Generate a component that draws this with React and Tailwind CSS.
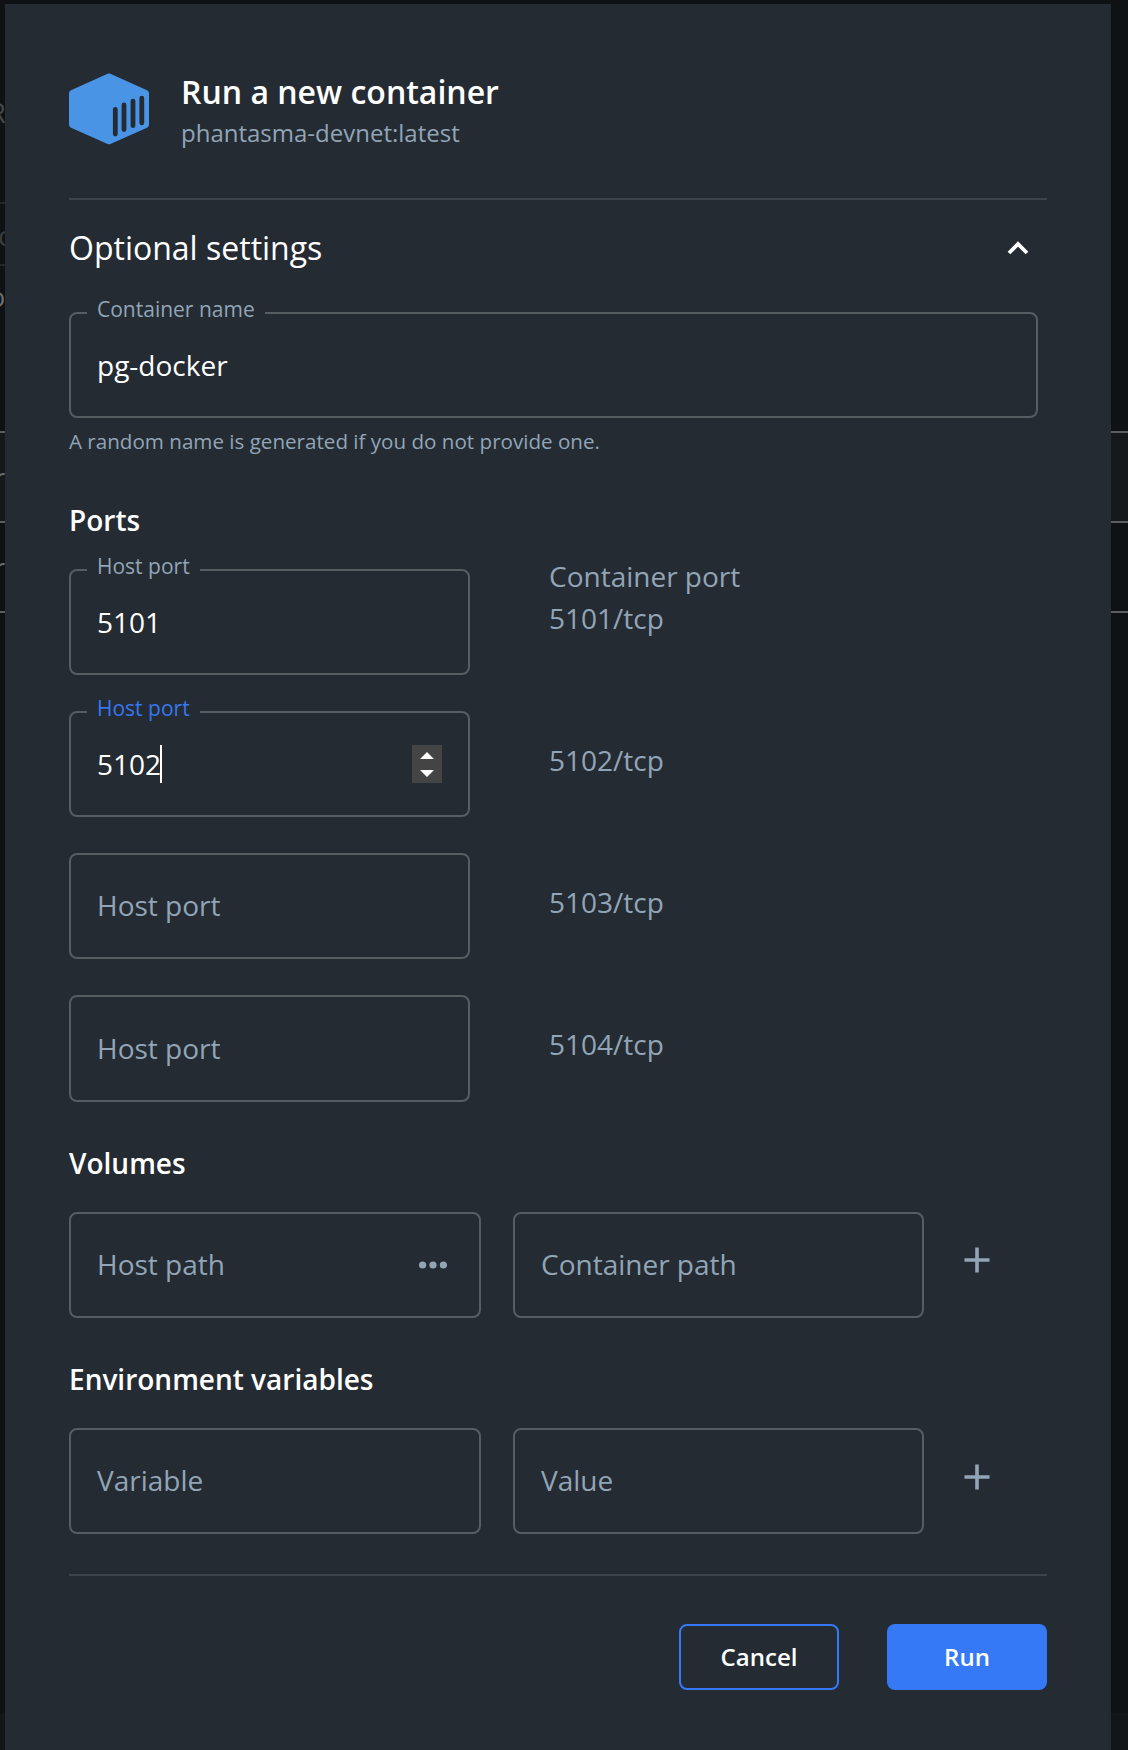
import React from "react";

function Field({ className = "h-[106px]", label, value, floating, active, children }) {
  return (
    <div className={`relative flex items-center rounded-lg border-2 border-[#575d61] px-[26px] ${className}`}>
      {floating && (
        <span
          className={`absolute -top-[19px] left-[16px] bg-[#242b32] pr-[10px] pl-[10px] text-[21px] leading-[28px] whitespace-nowrap ${active ? "text-[#3678ee]" : "text-[#92a5b7]"}`}
        >
          {label}
        </span>
      )}
      <span className={`text-[28px] leading-[38px] whitespace-nowrap ${value ? "text-white" : "-mt-[2px] text-[#92a5b7]"}`}>
        {value || label}
      </span>
      {children}
    </div>
  );
}

function Plus({ className = "" }) {
  return (
    <svg className={className} width="26" height="26" viewBox="0 0 26 26" stroke="#92a5b7" strokeWidth="3.6">
      <path d="M13 0.5V25.5M0.5 13H25.5" />
    </svg>
  );
}

function Logo() {
  return (
    <svg className="mt-[5px]" width="80" height="72" viewBox="0 0 80 72">
      <path
        d="M38.6 0.8Q40 0 41.4 0.8L78 17.3Q80 18.3 80 20.3V51.7Q80 53.7 78 54.7L41.4 71Q40 71.6 38.6 71L2 54.7Q0 53.7 0 51.7V20.3Q0 18.3 2 17.3Z"
        fill="#4a94e6"
      />
      <path d="M46.3 36.5V61M55 32V56.5M64 28.2V52.7M72.8 25.2V49.9" stroke="#242b32" strokeWidth="4.8" strokeLinecap="round" />
    </svg>
  );
}

function PortRow({ port, children }) {
  return (
    <div className="flex h-[142px] items-start">
      {children}
      <div className="ml-[79px] pt-[30px] text-[28px] leading-[38px] text-[#92a5b7]">{port}/tcp</div>
    </div>
  );
}

function Backdrop({ className, left }) {
  const line = "h-[2px] shrink-0 bg-[#5b5d5e]";
  const text = "absolute text-[27px] leading-[30px]";
  return (
    <div className={`relative flex h-full shrink-0 flex-col overflow-hidden bg-[#0e1214] ${className}`}>
      <div className="h-[431px] shrink-0" />
      <div className={line} />
      <div className="h-[88px] shrink-0 bg-[#16191b]" />
      <div className={line} />
      <div className="h-[88px] shrink-0" />
      <div className={line} />
      <div className="h-[1100px] shrink-0" />
      <div className="flex-1 bg-[#121618]" />
      {left && (
        <>
          <div className="absolute top-[202px] h-[2px] w-full bg-[#24282b]" />
          <div className="absolute top-[264px] h-[2px] w-full bg-[#24282b]" />
          <span className={`${text} top-[98px] -left-[11px] text-[#44484b]`}>R</span>
          <span className={`${text} top-[221px] -left-[2px] text-[#3a3d3f]`}>c</span>
          <span className={`${text} top-[282px] -left-[11px] text-[#6c6e6f]`}>o</span>
          <span className={`${text} top-[463px] -left-[6px] text-[#6c6e6f]`}>r</span>
          <span className={`${text} top-[553px] -left-[6px] text-[#6c6e6f]`}>r</span>
        </>
      )}
    </div>
  );
}

export default function App() {
  return (
    <div className="flex h-[1750px] w-[1128px] overflow-hidden bg-[#0e1214] font-['Open_Sans','Noto_Sans',sans-serif]">
      <Backdrop className="w-[5px]" left />
      <main className="mt-[4px] w-[1106px] shrink-0 bg-[#242b32] pr-[64px] pl-[64px]">
        <header className="flex h-[196px] items-start border-b-2 border-[#3d454b] pt-[64px]">
          <Logo />
          <div className="ml-[32px] pt-[2px]">
            <h1 className="text-[32px] leading-[44px] font-semibold text-white">Run a new container</h1>
            <p className="mt-[2px] text-[24px] leading-[34px] text-[#92a5b7]">phantasma-devnet:latest</p>
          </div>
        </header>

        <div className="flex h-[112px] items-start justify-between pt-[26px] pr-[18px]">
          <h2 className="text-[32px] leading-[44px] text-white">Optional settings</h2>
          <svg className="mt-[15px]" width="22" height="14" viewBox="0 0 22 14" fill="none" stroke="#fff" strokeWidth="3.8">
            <path d="M2 12L11 3L20 12" />
          </svg>
        </div>
        <Field className="h-[106px] w-[969px]" label="Container name" value="pg-docker" floating />
        <p className="mt-[9px] text-[20.6px] leading-[28px] text-[#92a5b7]">
          A random name is generated if you do not provide one.
        </p>

        <h3 className="mt-[46px] text-[28px] leading-[38px] font-semibold text-white">Ports</h3>
        <div className="mt-[30px]">
          <div className="flex h-[142px] items-start">
            <Field className="h-[106px] w-[401px]" label="Host port" value="5101" floating />
            <div className="-mt-[14px] ml-[79px] text-[28px] leading-[42px] text-[#92a5b7]">
              <div>Container port</div>
              <div>5101/tcp</div>
            </div>
          </div>
          <PortRow port="5102">
            <Field className="h-[106px] w-[401px]" label="Host port" value="5102" floating active>
              <span className="-ml-[1px] h-[38px] w-[2px] bg-white" />
              <span className="ml-auto flex h-[38px] w-[30px] items-center justify-center bg-[#444444]">
                <svg width="14" height="26" viewBox="0 0 14 26" fill="#fff">
                  <path d="M0 8L7 1L14 8ZM0 19H14L7 26Z" />
                </svg>
              </span>
            </Field>
          </PortRow>
          <PortRow port="5103">
            <Field className="h-[106px] w-[401px]" label="Host port" />
          </PortRow>
          <PortRow port="5104">
            <Field className="h-[107px] w-[401px]" label="Host port" />
          </PortRow>
        </div>

        <h3 className="mt-[7px] text-[28px] leading-[38px] font-semibold text-white">Volumes</h3>
        <div className="mt-[30px] flex items-start">
          <Field className="h-[106px] w-[412px]" label="Host path">
            <svg className="mr-[6px] ml-auto" width="28" height="8" viewBox="0 0 28 8" fill="#92a5b7">
              <circle cx="3.6" cy="4" r="3.6" />
              <circle cx="14" cy="4" r="3.6" />
              <circle cx="24.4" cy="4" r="3.6" />
            </svg>
          </Field>
          <Field className="ml-[32px] h-[106px] w-[411px]" label="Container path" />
          <Plus className="mt-[35px] ml-[40px]" />
        </div>

        <h3 className="mt-[42px] text-[28px] leading-[38px] font-semibold text-white">Environment variables</h3>
        <div className="mt-[30px] flex items-start">
          <Field className="h-[106px] w-[412px]" label="Variable" />
          <Field className="ml-[32px] h-[106px] w-[411px]" label="Value" />
          <Plus className="mt-[36px] ml-[40px]" />
        </div>

        <footer className="mt-[40px] flex justify-end gap-12 border-t-2 border-[#3d454b] pt-[48px]">
          <button className="h-[66px] w-[160px] rounded-lg border-2 border-[#3579f6] text-[24px] font-semibold text-white">Cancel</button>
          <button className="h-[66px] w-[160px] rounded-lg bg-[#3579f6] text-[24px] font-semibold text-white">Run</button>
        </footer>
      </main>
      <Backdrop className="w-[17px]" />
    </div>
  );
}
